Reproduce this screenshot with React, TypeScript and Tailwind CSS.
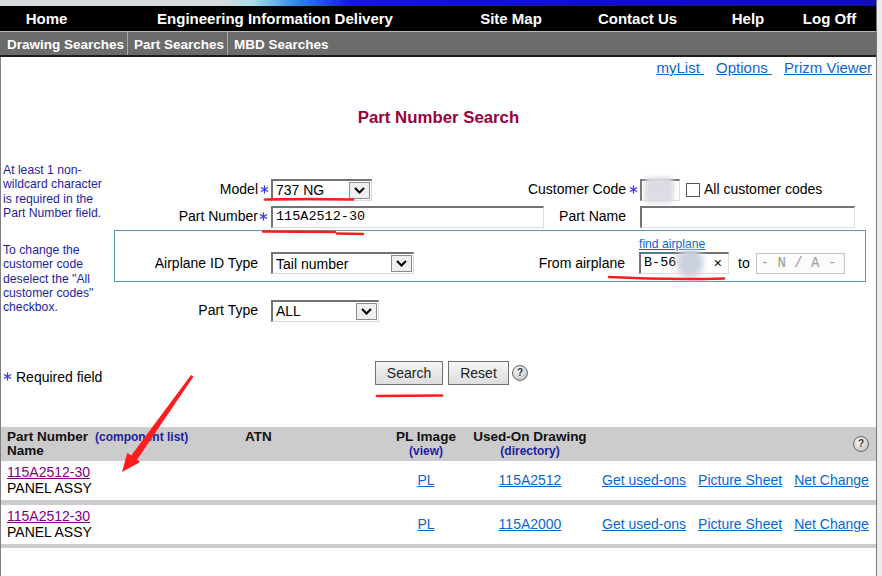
import React from "react";

const Ast = () => (
  <svg width="9" height="9" viewBox="0 0 10 10" className="shrink-0">
    <g stroke="#3535f0" strokeWidth="1.4" strokeLinecap="round">
      <line x1="5" y1="1" x2="5" y2="9" />
      <line x1="1.5" y1="3" x2="8.5" y2="7" />
      <line x1="1.5" y1="7" x2="8.5" y2="3" />
    </g>
  </svg>
);

const Chevron = () => (
  <svg width="11" height="7" viewBox="0 0 11 7">
    <path d="M1 1 L5.5 5.5 L10 1" fill="none" stroke="#000" strokeWidth="2" />
  </svg>
);

const Select = ({ w, text }: { w: string; text: string }) => (
  <div
    className={`${w} h-[22px] flex items-center justify-between bg-white border-t-2 border-l-2 border-r border-b border-t-[#727272] border-l-[#727272] border-r-[#d8d8d8] border-b-[#d8d8d8] pl-[3px] pr-[1px] py-[1px]`}
  >
    <span className="text-[14px] leading-[16px] text-black">{text}</span>
    <div className="w-[21px] h-full flex items-center justify-center bg-[#efefef] border border-[#8c8c8c]">
      <Chevron />
    </div>
  </div>
);

const inputCls =
  "h-[22px] flex items-center bg-white border-t-2 border-l-2 border-r border-b border-t-[#727272] border-l-[#727272] border-r-[#dcdcdc] border-b-[#dcdcdc] pl-[3px]";

const Help = () => (
  <div className="w-[16px] h-[16px] rounded-full border border-[#6a6a6a] bg-[radial-gradient(circle_at_40%_35%,#fafafa_0%,#d6d6d6_55%,#a8a8a8_100%)] flex items-center justify-center shrink-0">
    <span className="text-[10px] leading-[10px] font-bold text-[#333]">?</span>
  </div>
);

const mono = "font-['Liberation_Mono','Courier_New',monospace]";

export default function App() {
  return (
    <div className="relative w-[882px] h-[576px] overflow-hidden flex bg-white font-['Liberation_Sans',Arial,sans-serif]">
      <div className="w-[876px] flex flex-col">
        {/* top banner strip */}
        <div className="h-[6px] bg-[linear-gradient(90deg,#d9dcdf_0%,#d9dcdf_25%,#a6dbe8_29%,#2a86e6_34%,#1616d8_40%,#1111c6_62%,#0d0db2_100%)]" />
        {/* main nav */}
        <div className="h-[25px] bg-black flex items-center text-white font-bold text-[15px] leading-[18px]">
          <div className="w-[93px] text-center">Home</div>
          <div className="w-[364px] text-center">Engineering Information Delivery</div>
          <div className="w-[108px] text-center">Site Map</div>
          <div className="w-[145px] text-center">Contact Us</div>
          <div className="w-[76px] text-center">Help</div>
          <div className="w-[87px] text-center">Log Off</div>
        </div>
        {/* sub nav */}
        <div className="h-[26px] bg-[#6b6b6b] border-t border-t-[#b8b8b8] border-b-2 border-b-[#1c1c1c] flex text-white font-bold text-[13.5px]">
          <div className="w-[128px] pl-[7px] pt-[3px] flex items-center border-r border-r-[#a8a8a8]">Drawing Searches</div>
          <div className="w-[100px] pl-[6px] pt-[3px] flex items-center border-r border-r-[#a8a8a8]">Part Searches</div>
          <div className="pl-[6px] pt-[3px] flex items-center">MBD Searches</div>
        </div>
        {/* content */}
        <div className="flex-1 border-l border-l-[#808080] flex flex-col">
          <div className="h-[20px] pt-[2px] flex justify-end gap-[12px] pr-[4px] text-[15px] leading-[18px] text-[#0b66cc]">
            <span className="underline">myList&nbsp;</span>
            <span className="underline">Options&nbsp;</span>
            <span className="underline">Prizm Viewer</span>
          </div>
          <div className="mt-[31px] text-center text-[16.8px] leading-[20px] font-bold text-[#99003d]">
            Part Number Search
          </div>

          {/* form section */}
          <div className="mt-[35px] flex">
            <div className="w-[111px] pl-[2px] text-[12.2px] leading-[14.3px] text-[#1e1ea0]">
              <div>
                At least 1 non-
                <br />
                wildcard character
                <br />
                is required in the
                <br />
                Part Number field.
              </div>
              <div className="mt-[23px]">
                To change the
                <br />
                customer code
                <br />
                deselect the "All
                <br />
                customer codes"
                <br />
                checkbox.
              </div>
            </div>

            <div className="flex-1 pt-[13px] text-[14px] text-black">
              {/* row 1 */}
              <div className="h-[27px] flex items-center">
                <div className="w-[146px] flex justify-end whitespace-nowrap">Model</div>
                <div className="w-[12px] pl-[2px] flex items-center">
                  <Ast />
                </div>
                <div className="w-[278px] pl-[1px]">
                  <Select w="w-[101px]" text="737 NG" />
                </div>
                <div className="w-[78px] flex justify-end whitespace-nowrap">Customer Code</div>
                <div className="w-[14px] pl-[3px] flex items-center">
                  <Ast />
                </div>
                <div className={`${inputCls} w-[40px] relative overflow-visible`}>
                  <div className="absolute left-[2px] top-[-4px] w-[30px] h-[26px] bg-[#dcdce4] blur-[2px] rounded-[6px]" />
                </div>
                <div className="ml-[6px] w-[14px] h-[14px] border border-[#555] bg-white" />
                <span className="ml-[4px] whitespace-nowrap">All customer codes</span>
              </div>
              {/* row 2 */}
              <div className="h-[27px] flex items-center">
                <div className="w-[146px] flex justify-end whitespace-nowrap">Part Number</div>
                <div className="w-[12px] pl-[1px] flex items-center">
                  <Ast />
                </div>
                <div className="w-[278px] pl-[1px]">
                  <div className={`${inputCls} w-[273px]`}>
                    <span className={`${mono} text-[13.5px] text-black`}>115A2512-30</span>
                  </div>
                </div>
                <div className="w-[78px] flex justify-end whitespace-nowrap">Part Name</div>
                <div className="w-[14px]" />
                <div className={`${inputCls} w-[215px]`} />
              </div>
              {/* airplane box */}
              <div className="ml-[2px] w-[752px] h-[52px] border border-[#5d9fa0] flex items-end pb-[7px]">
                <div className="w-[143px] h-[21px] flex items-center justify-end whitespace-nowrap">Airplane ID Type</div>
                <div className="w-[12px]" />
                <div className="w-[278px] pl-[1px]">
                  <Select w="w-[143px]" text="Tail number" />
                </div>
                <div className="w-[77px] h-[21px] flex items-center justify-end whitespace-nowrap">From airplane</div>
                <div className="w-[14px]" />
                <div className="flex flex-col">
                  <span className="text-[12.2px] leading-[15px] text-[#0b66cc] underline whitespace-nowrap">find airplane</span>
                  <div className={`${inputCls} w-[90px] h-[21px] relative justify-between pr-[6px]`}>
                    <span className={`${mono} text-[13.5px] text-black`}>B-56</span>
                    <div className="absolute left-[36px] top-[-6px] w-[26px] h-[30px] bg-[#c9d1dc] blur-[3px] rounded-full" />
                    <span className="text-[14px] text-black relative">×</span>
                  </div>
                </div>
                <div className="ml-[9px] h-[21px] flex items-center">to</div>
                <div className="ml-[6px] w-[89px] h-[21px] flex items-center border border-[#c4c4c4] bg-[#fbfbfb] pl-[4px]">
                  <span className={`${mono} text-[14px] text-[#9a9a9a] whitespace-pre`}>- N / A -</span>
                </div>
              </div>
              {/* part type */}
              <div className="mt-[15px] h-[27px] flex items-center">
                <div className="w-[146px] flex justify-end whitespace-nowrap">Part Type</div>
                <div className="w-[12px]" />
                <div className="pl-[1px]">
                  <Select w="w-[108px]" text="ALL" />
                </div>
              </div>
            </div>
          </div>

          {/* required + buttons */}
          <div className="mt-[37px] h-[24px] flex text-[14px]">
            <div className="w-[374px] pl-[2px] pt-[8px] flex items-center h-[24px] leading-[16px]">
              <div className="mt-[-1px]">
                <Ast />
              </div>
              <span className="ml-[4px] mt-[-1px] text-black">Required field</span>
            </div>
            <button className="w-[68px] h-[24px] border border-[#707070] bg-[linear-gradient(#f6f6f6,#dddddd)] text-[14px] text-[#222] leading-[16px]">
              Search
            </button>
            <button className="ml-[5px] w-[61px] h-[24px] border border-[#707070] bg-[linear-gradient(#f6f6f6,#dddddd)] text-[14px] text-[#222] leading-[16px]">
              Reset
            </button>
            <div className="ml-[3px] self-center">
              <Help />
            </div>
          </div>

          {/* table */}
          <div className="mt-[42px]">
            <div className="h-[34px] bg-[#cccccc] flex pt-[3px] leading-[14px]">
              <div className="w-[239px] pl-[6px]">
                <div className="flex items-baseline">
                  <span className="font-bold text-[13.5px] text-[#111]">Part Number</span>
                  <span className="ml-[7px] font-bold text-[12px] text-[#1e1ea0]">(component list)</span>
                </div>
                <div className="font-bold text-[13.5px] text-[#111]">Name</div>
              </div>
              <div className="w-[150px] pl-[5px] font-bold text-[13.5px] text-[#111]">ATN</div>
              <div className="w-[72px] text-center">
                <div className="font-bold text-[13.5px] text-[#111]">PL Image</div>
                <div className="font-bold text-[12px] text-[#1e1ea0]">(view)</div>
              </div>
              <div className="w-[136px] text-center">
                <div className="font-bold text-[13.5px] text-[#111] whitespace-nowrap">Used-On Drawing</div>
                <div className="font-bold text-[12px] text-[#1e1ea0]">(directory)</div>
              </div>
              <div className="flex-1 flex justify-end items-center pr-[7px] pb-[3px]">
                <Help />
              </div>
            </div>
            {[
              { dwg: "115A2512" },
              { dwg: "115A2000" },
            ].map((r, i) => (
              <div key={i}>
                <div className="h-[39px] bg-white flex text-[14px]">
                  <div className="w-[239px] pl-[6px] pt-[3px] leading-[16px]">
                    <div className="text-[#800080] underline">115A2512-30</div>
                    <div className="text-black">PANEL ASSY</div>
                  </div>
                  <div className="w-[150px]" />
                  <div className="w-[72px] flex items-center justify-center text-[#0b66cc] underline">PL</div>
                  <div className="w-[136px] flex items-center justify-center text-[#0b66cc] underline">{r.dwg}</div>
                  <div className="flex-1 flex items-center gap-[12px] pl-[4px] text-[#0b66cc] whitespace-nowrap">
                    <span className="underline">Get used-ons</span>
                    <span className="underline">Picture Sheet</span>
                    <span className="underline">Net Change</span>
                  </div>
                </div>
                <div className={i === 0 ? "h-[5px] bg-[#cccccc]" : "h-[4px] bg-[#cccccc]"} />
              </div>
            ))}
          </div>
        </div>
      </div>
      <div className="w-[6px] border-l border-l-[#7a7a7a] bg-[#ececec]" />

      {/* red annotations overlay */}
      <svg className="absolute left-0 top-0 pointer-events-none" width="882" height="576" viewBox="0 0 882 576">
        <g stroke="#ff1c1c" strokeWidth="2.6" strokeLinecap="round" fill="none">
          <path d="M265 199.5 Q310 198.5 353 199.5" />
          <path d="M263 231.5 L335 232" />
          <path d="M337 233.5 L363 234" />
          <path d="M609 277 Q665 280 724 278.5" />
          <path d="M377 396 L442 395.5" />
        </g>
        <polygon points="191,375 193.5,376.5 136.5,460.5 130.5,456.5" fill="#ff1c1c" />
        <polygon points="122,472 127.3,452.8 140.2,462" fill="#ff1c1c" />
      </svg>
    </div>
  );
}
